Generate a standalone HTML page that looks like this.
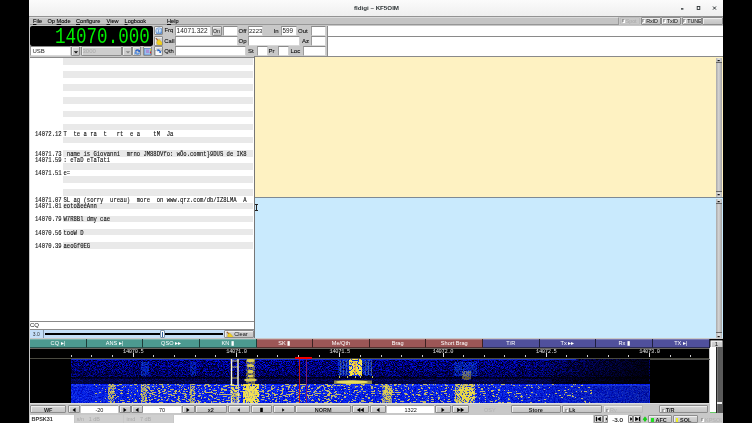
<!DOCTYPE html>
<html><head><meta charset="utf-8">
<style>
*{margin:0;padding:0;box-sizing:border-box}
html,body{width:752px;height:423px;overflow:hidden;background:#000}
body{position:relative;font-family:"Liberation Sans",sans-serif;will-change:transform}
.a{position:absolute}
.btn{position:absolute;background:linear-gradient(#d8d8d8,#c4c4c4);border:1px solid #8c8c8c;border-radius:1px;box-shadow:inset 1px 1px 0 #eee;font-size:5.5px;color:#111;text-align:center;white-space:nowrap;overflow:hidden}
.inp{position:absolute;background:#fff;border-top:1px solid #8a8a8a;border-left:1px solid #9c9c9c;border-bottom:1px solid #d8d8d8;border-right:1px solid #d0d0d0;font-size:6px;white-space:nowrap;overflow:hidden}
.lbl{position:absolute;font-size:6px;color:#111;white-space:nowrap}
.mono{font-family:"Liberation Mono",monospace}
.lt{font-family:"Liberation Mono",monospace;font-size:5.55px;letter-spacing:0;line-height:6.57px;color:#111;white-space:nowrap;margin-top:1.8px;transform:scale(1,1.32);transform-origin:0 50%;-webkit-text-stroke:0.1px #111}
.lt2{font-family:"Liberation Sans",sans-serif;font-size:6px;color:#111;white-space:nowrap}
.mac{position:absolute;top:338.9px;height:8.8px;color:#fff;font-size:5.6px;font-weight:normal;line-height:8.3px;text-align:center;border-bottom:0.8px solid rgba(0,0,0,.45);border-right:1px solid rgba(0,0,0,.6);box-shadow:inset 0 0.8px 0 rgba(255,255,255,.3)}
.sl{font-family:"Liberation Mono",monospace;font-size:5.4px;letter-spacing:-0.3px;color:#e0e0e0;text-align:center;line-height:5px}
.cb{font-size:5.5px;line-height:8px;}
.ci{background:#fff;font-size:5.5px;line-height:9px;text-align:center;white-space:nowrap;overflow:hidden;border-top:1px solid #999;color:#111}
.ck{display:inline-block;width:3px;height:4px;border:0.5px solid #999;border-right-color:#fff;border-bottom-color:#fff;margin-right:1px;vertical-align:-0.5px}
.ind{display:inline-block;width:2.5px;height:4px;margin-right:2px;vertical-align:-0.5px}
.lb2{font-size:5.9px;color:#111;-webkit-text-stroke:0.12px #111}
.tb{font-size:5.4px;line-height:7.2px;text-align:left;padding-left:0.8px;color:#111;letter-spacing:-0.1px}
.sbb{width:5.3px;background:linear-gradient(90deg,#b4b4b4,#e4e4e4 50%,#b4b4b4);border-bottom:0.6px solid #666}
.sbb svg{position:absolute;left:0;top:0.3px}
u{text-decoration-thickness:0.5px;text-underline-offset:1px}
.lbl{-webkit-text-stroke:0.1px #111}
</style></head><body>
<!-- window -->
<div class="a" style="left:29px;top:0;width:694px;height:423px;background:#c8c8c8"></div>
<!-- title bar -->
<div class="a" style="left:29px;top:0;width:694px;height:16.8px;background:linear-gradient(#fbfbfb,#efefef);border-bottom:1px solid #939393"></div>
<div class="a" style="left:300px;top:3.8px;width:152px;text-align:center;font-weight:bold;font-size:6.2px;color:#2e3436;padding-left:1px">fldigi – KF5OIM</div>
<svg class="a" style="left:680px;top:5px" width="40" height="6"><rect x="1" y="3.2" width="2.4" height="1.4" fill="#2e3436"/><rect x="17.2" y="1.5" width="2.6" height="3" fill="none" stroke="#2e3436" stroke-width="0.9"/><path d="M33 1.5L36 4.6M36 1.5L33 4.6" stroke="#2e3436" stroke-width="1"/></svg>

<!-- menu bar -->
<div class="a" style="left:30px;top:16.8px;width:589px;height:8.5px;background:#c4c4c4;border-top:0.7px solid #dadada;border-bottom:1px solid #979797;border-right:1px solid #9a9a9a"></div>
<div class="lbl" style="left:33px;top:17.8px;font-size:5.6px;color:#000"><u>F</u>ile</div>
<div class="lbl" style="left:47.5px;top:17.8px;font-size:5.6px;color:#000">Op <u>M</u>ode</div>
<div class="lbl" style="left:76px;top:17.8px;font-size:5.6px;color:#000"><u>C</u>onfigure</div>
<div class="lbl" style="left:106.5px;top:17.8px;font-size:5.6px;color:#000"><u>V</u>iew</div>
<div class="lbl" style="left:124.5px;top:17.8px;font-size:5.6px;color:#000"><u>L</u>ogbook</div>
<div class="lbl" style="left:167px;top:17.8px;font-size:5.6px;color:#000"><u>H</u>elp</div>

<div class="btn tb" style="left:620px;top:16.8px;width:19.5px;height:8.5px;color:#aaa;background:#c8c8c8;border-color:#bdbdbd;box-shadow:none"><span class="ck"></span>Spot</div>
<div class="btn tb" style="left:640.5px;top:16.8px;width:20px;height:8.5px"><span class="ck"></span>RxID</div>
<div class="btn tb" style="left:661px;top:16.8px;width:20px;height:8.5px"><span class="ck"></span>TxID</div>
<div class="btn tb" style="left:681.5px;top:16.8px;width:20px;height:8.5px"><span class="ck"></span>TUNE</div>
<div class="btn" style="left:702px;top:16.8px;width:20.5px;height:8.5px"></div>

<!-- freq display -->
<div class="a mono" style="left:30px;top:25.5px;width:122.5px;height:20.5px;background:#000;border-radius:2px;color:#00f000;font-size:17.6px;line-height:20px;text-align:right;padding-right:2.6px"><span style="display:inline-block;transform:translateY(1.2px) scale(1,1.29);transform-origin:50% 55%">14070.000</span></div>

<!-- mode row -->
<div class="inp" style="left:30px;top:46.3px;width:40.5px;height:9.7px;font-size:6px;line-height:8px;padding-left:1.5px;color:#222">USB</div>
<div class="btn" style="left:70.5px;top:46.3px;width:9.8px;height:9.7px"><svg width="8" height="8" style="position:absolute;left:0.5px;top:0.5px"><path d="M1.8 3.2h4.4L4 5.6z" fill="#111"/></svg></div>
<div class="btn" style="left:80.5px;top:46.3px;width:41.5px;height:9.7px;color:#aaa;text-align:left;padding-left:1px;line-height:8px;font-size:6px;background:#cdcdcd">3000</div>
<div class="btn" style="left:121.5px;top:46.3px;width:10.5px;height:9.7px;background:#cdcdcd"><svg width="8" height="8" style="position:absolute;left:1px;top:0.5px"><path d="M1.8 3.2h4.4L4 5.6z" fill="#888"/></svg></div>
<div class="btn" style="left:132.3px;top:46.3px;width:8.8px;height:9.7px"><svg width="7" height="8" style="position:absolute;left:0.6px;top:0.7px"><path d="M1 3.5A2.6 2.6 0 0 1 5.6 2.2L6.4 1.2V4H3.7l1-0.9A1.5 1.5 0 0 0 2.2 3.8z" fill="#2a62c8"/><path d="M6 4.5A2.6 2.6 0 0 1 1.4 5.8L0.6 6.8V4H3.3l-1 .9A1.5 1.5 0 0 0 4.8 4.2z" fill="#5a92e0"/></svg></div>
<div class="btn" style="left:142.8px;top:46.3px;width:9px;height:9.7px"><svg width="8" height="8" style="position:absolute;left:0.5px;top:0.7px"><rect x="0.5" y="0.5" width="6" height="6.5" fill="#9cc0ec" stroke="#4a78c0" stroke-width="0.6"/><rect x="2" y="1.5" width="3" height="3.5" fill="#a890d8"/><circle cx="6.8" cy="1.8" r="1" fill="#e8e020"/><circle cx="6.8" cy="4.4" r="1" fill="#e03020"/></svg></div>

<!-- icon buttons -->
<div class="btn" style="left:153.6px;top:25.6px;width:9px;height:9.5px"><svg width="8" height="8" style="position:absolute;left:0.3px;top:0.4px"><defs><radialGradient id="gl" cx="0.4" cy="0.35" r="0.7"><stop offset="0" stop-color="#fff"/><stop offset="0.5" stop-color="#b8d4f0"/><stop offset="1" stop-color="#3a78c8"/></radialGradient></defs><circle cx="4" cy="4" r="3.3" fill="url(#gl)" stroke="#5a8ad0" stroke-width="0.5"/><path d="M2.5 2.2q1.2-.4 1.6.6l-.9 1.1q.7 1 .2 1.9" stroke="#3a70c0" stroke-width="0.7" fill="none"/></svg></div>
<div class="btn" style="left:153.6px;top:35.6px;width:9px;height:10px"><svg width="8" height="9" style="position:absolute;left:0.3px;top:0.3px"><path d="M0.8 1.2L3.2 3.6" stroke="#a0602a" stroke-width="1.2"/><path d="M2.6 3.2L4.4 2.6L7.6 6.2L6.6 8.2L3.2 8.2L1.6 5.8z" fill="#f0d020" stroke="#c8a010" stroke-width="0.4"/></svg></div>
<div class="btn" style="left:153.6px;top:46px;width:9px;height:10px"><svg width="8" height="9" style="position:absolute;left:0.3px;top:0.5px"><rect x="0.6" y="2.2" width="6.4" height="5.6" fill="#fafafa" stroke="#888" stroke-width="0.4"/><path d="M2 1.6Q4.6 0.6 5.4 3.2L6.4 2.6L5.8 5.2L3.6 4.2L4.6 3.8Q4.2 2.4 2.6 3.4z" fill="#2a6ad0"/></svg></div>
<div class="lbl lb2" style="left:164.5px;top:27.3px">Frq</div>
<div class="lbl lb2" style="left:164.3px;top:37.5px">Call</div>
<div class="lbl lb2" style="left:164.3px;top:48px">Qth</div>

<!-- log row inputs -->
<div class="inp" style="left:174.5px;top:25.5px;width:36px;height:10px;line-height:8.5px;font-size:6.5px;padding-left:1px;color:#222;letter-spacing:0.05px">14071.322</div>
<div class="btn" style="left:211.5px;top:25.5px;width:10px;height:10px;line-height:8px">On</div>
<div class="inp" style="left:222.5px;top:25.5px;width:15.5px;height:10px"></div>
<div class="lbl" style="left:238.5px;top:27.5px">Off</div>
<div class="inp" style="left:247.5px;top:25.5px;width:15.5px;height:10px;line-height:8.5px;font-size:6px;padding-left:0.5px;color:#222">2223</div>
<div class="lbl" style="left:273.5px;top:27.5px">In</div>
<div class="inp" style="left:280.5px;top:25.5px;width:16px;height:10px;line-height:8.5px;font-size:6.3px;padding-left:1px;color:#222">599</div>
<div class="lbl" style="left:298px;top:27.5px">Out</div>
<div class="inp" style="left:310.5px;top:25.5px;width:15.5px;height:10px"></div>

<div class="inp" style="left:174.5px;top:35.5px;width:63.5px;height:10px"></div>
<div class="lbl" style="left:238.5px;top:37.5px">Op</div>
<div class="inp" style="left:247.5px;top:35.5px;width:52.5px;height:10px"></div>
<div class="lbl" style="left:302px;top:37.5px">Az</div>
<div class="inp" style="left:310.5px;top:35.5px;width:15.5px;height:10px"></div>

<div class="inp" style="left:174.5px;top:46px;width:71.5px;height:10px"></div>
<div class="lbl" style="left:248px;top:48px">St</div>
<div class="inp" style="left:257px;top:46px;width:11px;height:10px"></div>
<div class="lbl" style="left:268.5px;top:48px">Pr</div>
<div class="inp" style="left:277.5px;top:46px;width:11.5px;height:10px"></div>
<div class="lbl" style="left:290.5px;top:48px">Loc</div>
<div class="inp" style="left:302.5px;top:46px;width:23.5px;height:10px"></div>

<!-- separator + right white -->
<div class="a" style="left:326.5px;top:25.5px;width:1.5px;height:31px;background:#8a8a8a"></div>
<div class="a" style="left:328px;top:25.5px;width:394.5px;height:10px;background:#fff"></div>
<div class="a" style="left:328px;top:35.5px;width:394.5px;height:1px;background:#8a8a8a"></div>
<div class="a" style="left:328px;top:36.5px;width:394.5px;height:20px;background:#fff;border-bottom:1px solid #8a8a8a"></div>

<!-- left list panel -->
<div class="a" style="left:30px;top:56.5px;width:225px;height:265px;background:#fff;border-top:1px solid #8a8a8a"></div>
<div class="a" style="left:63px;top:58.00px;width:190px;height:6.57px;background:#e9e9e9"></div>
<div class="a" style="left:63px;top:71.14px;width:190px;height:6.57px;background:#e9e9e9"></div>
<div class="a" style="left:63px;top:84.28px;width:190px;height:6.57px;background:#e9e9e9"></div>
<div class="a" style="left:63px;top:97.42px;width:190px;height:6.57px;background:#e9e9e9"></div>
<div class="a" style="left:63px;top:110.56px;width:190px;height:6.57px;background:#e9e9e9"></div>
<div class="a" style="left:63px;top:123.70px;width:190px;height:6.57px;background:#e9e9e9"></div>
<div class="a" style="left:63px;top:136.84px;width:190px;height:6.57px;background:#e9e9e9"></div>
<div class="a" style="left:63px;top:149.98px;width:190px;height:6.57px;background:#e9e9e9"></div>
<div class="a" style="left:63px;top:163.12px;width:190px;height:6.57px;background:#e9e9e9"></div>
<div class="a" style="left:63px;top:176.26px;width:190px;height:6.57px;background:#e9e9e9"></div>
<div class="a" style="left:63px;top:189.40px;width:190px;height:6.57px;background:#e9e9e9"></div>
<div class="a" style="left:63px;top:202.54px;width:190px;height:6.57px;background:#e9e9e9"></div>
<div class="a" style="left:63px;top:215.68px;width:190px;height:6.57px;background:#e9e9e9"></div>
<div class="a" style="left:63px;top:228.82px;width:190px;height:6.57px;background:#e9e9e9"></div>
<div class="a" style="left:63px;top:241.96px;width:190px;height:6.57px;background:#e9e9e9"></div>
<div class="a lt" style="left:35px;top:130.27px">14072.12</div>
<div class="a lt" style="left:63.5px;top:130.27px">T&nbsp;&nbsp;te&nbsp;a&nbsp;ra&nbsp;&nbsp;t&nbsp;&nbsp;&nbsp;rt&nbsp;&nbsp;e&nbsp;a&nbsp;&nbsp;&nbsp;&nbsp;tM&nbsp;&nbsp;Ja</div>
<div class="a lt" style="left:35px;top:149.98px">14071.73</div>
<div class="a lt" style="left:63.5px;top:149.98px">&nbsp;name&nbsp;is&nbsp;Giovanni&nbsp;&nbsp;mrno&nbsp;JM88DVfo:&nbsp;wÕo.comnt}9DUS&nbsp;de&nbsp;IK8</div>
<div class="a lt" style="left:35px;top:156.55px">14071.59</div>
<div class="a lt" style="left:63.5px;top:156.55px">:&nbsp;eTaD&nbsp;eTaTati</div>
<div class="a lt" style="left:35px;top:169.69px">14071.51</div>
<div class="a lt" style="left:63.5px;top:169.69px">e=</div>
<div class="a lt" style="left:35px;top:195.97px">14071.07</div>
<div class="a lt" style="left:63.5px;top:195.97px">SL&nbsp;ag&nbsp;(sorry&nbsp;&nbsp;ureau)&nbsp;&nbsp;more&nbsp;&nbsp;on&nbsp;www.qrz.com/db/IZ8LMA&nbsp;&nbsp;A</div>
<div class="a lt" style="left:35px;top:202.54px">14071.01</div>
<div class="a lt" style="left:63.5px;top:202.54px">eotoaeeAnn</div>
<div class="a lt" style="left:35px;top:215.68px">14070.79</div>
<div class="a lt" style="left:63.5px;top:215.68px">W7R8Bl&nbsp;dmy&nbsp;cae</div>
<div class="a lt" style="left:35px;top:228.82px">14070.56</div>
<div class="a lt" style="left:63.5px;top:228.82px">tooW&nbsp;D</div>
<div class="a lt" style="left:35px;top:241.96px">14070.39</div>
<div class="a lt" style="left:63.5px;top:241.96px">aeoGf0EG</div>
<div class="a" style="left:30px;top:320.5px;width:225px;height:1px;background:#8a8a8a"></div>
<div class="a" style="left:30px;top:321.5px;width:225px;height:7.5px;background:#fff"></div>
<div class="a lt2" style="left:30px;top:321.6px">CQ</div>
<div class="a" style="left:30px;top:329px;width:225px;height:1px;background:#8a8a8a"></div>
<!-- slider row -->
<div class="a" style="left:30px;top:329.8px;width:225px;height:8.7px;background:#c4def8"></div>
<div class="a" style="left:30px;top:329.8px;width:13.6px;height:8.5px;background:#c4def8;border-right:1px solid #8496a8;font-size:5px;text-align:center;line-height:8.5px;color:#333">3.0</div>
<div class="a" style="left:44.5px;top:332.9px;width:178px;height:1.8px;background:#000"></div>
<div class="a" style="left:159.6px;top:330.3px;width:5px;height:7.6px;background:linear-gradient(90deg,#f4f8fc,#fff);border:0.6px solid #7890a8;border-radius:1px"></div>
<div class="a" style="left:161.6px;top:331.6px;width:1px;height:5px;background:#3060a0"></div>
<div class="btn" style="left:223.8px;top:330.2px;width:30.5px;height:8.2px;line-height:7px;font-size:5.6px;text-align:left;padding-left:9.5px;color:#111">Clear<svg width="8" height="8" style="position:absolute;left:1px;top:0"><path d="M0.8 0.8L3 3" stroke="#a0602a" stroke-width="1.1"/><path d="M2.4 2.8L4 2.2L6.8 5.4L5.9 7.2L2.9 7.2L1.5 5z" fill="#f0d020" stroke="#c8a010" stroke-width="0.4"/></svg></div>

<!-- yellow rx panel -->
<div class="a" style="left:254px;top:56.3px;width:469px;height:141.5px;background:#fef2c2;border-left:1px solid #777;border-top:1.2px solid #8a8a8a"></div>
<div class="a" style="left:716.3px;top:57.6px;width:5.3px;height:139.4px;background:linear-gradient(90deg,#a8a8a8,#d4d4d4 45%,#c8c8c8 60%,#a0a0a0)"></div>
<div class="a sbb" style="left:716.3px;top:57.6px;height:5.5px"><svg width="5" height="5"><rect x="1.5" y="2" width="2.3" height="1.2" rx="0.5" fill="#111"/></svg></div>
<div class="a sbb" style="left:716.3px;top:191.2px;height:5.8px;border-bottom:none;border-top:0.6px solid #666"><svg width="5" height="5"><rect x="1.5" y="2" width="2.3" height="1.2" rx="0.5" fill="#111"/></svg></div>
<div class="a" style="left:255px;top:197.1px;width:468px;height:1.3px;background:#7e8a94"></div>
<!-- blue tx panel -->
<div class="a" style="left:254px;top:198.3px;width:469px;height:140.2px;background:#c9eafd;border-left:1px solid #777"></div>
<div class="a" style="left:716.3px;top:198.5px;width:5.3px;height:139.7px;background:linear-gradient(90deg,#a8a8a8,#d4d4d4 45%,#c8c8c8 60%,#a0a0a0)"></div>
<div class="a sbb" style="left:716.3px;top:198.5px;height:5.5px"><svg width="5" height="5"><rect x="1.5" y="2" width="2.3" height="1.2" rx="0.5" fill="#111"/></svg></div>
<div class="a sbb" style="left:716.3px;top:332.4px;height:5.8px;border-bottom:none;border-top:0.6px solid #666"><svg width="5" height="5"><rect x="1.5" y="2" width="2.3" height="1.2" rx="0.5" fill="#111"/></svg></div>
<div class="a" style="left:256px;top:204px;width:1px;height:7px;background:#222"></div>
<div class="a" style="left:255.3px;top:204px;width:2.4px;height:0.8px;background:#222"></div>
<div class="a" style="left:255.3px;top:210.4px;width:2.4px;height:0.8px;background:#222"></div>

<!-- macro bar -->
<div class="a" style="left:30px;top:338.5px;width:693px;height:9.5px;background:#000"></div>
<div class="a mac" style="left:30.00px;width:56.63px;background:#4c9a90">CQ ▸|</div>
<div class="a mac" style="left:86.63px;width:56.63px;background:#4c9a90">ANS ▸|</div>
<div class="a mac" style="left:143.27px;width:56.63px;background:#4c9a90">QSO ▸▸</div>
<div class="a mac" style="left:199.90px;width:56.63px;background:#4c9a90">KN ▮</div>
<div class="a mac" style="left:256.53px;width:56.63px;background:#9c5656">SK ▮</div>
<div class="a mac" style="left:313.17px;width:56.63px;background:#9c5656">Me/Qth</div>
<div class="a mac" style="left:369.80px;width:56.63px;background:#9c5656">Brag</div>
<div class="a mac" style="left:426.43px;width:56.63px;background:#9c5656">Short Brag</div>
<div class="a mac" style="left:483.07px;width:56.63px;background:#50509c">T/R</div>
<div class="a mac" style="left:539.70px;width:56.63px;background:#50509c">Tx ▸▸</div>
<div class="a mac" style="left:596.33px;width:56.63px;background:#50509c">Rx ▮</div>
<div class="a mac" style="left:652.97px;width:56.63px;background:#50509c">TX ▸|</div>
<div class="btn" style="left:710.3px;top:339.5px;width:12.3px;height:8px;font-size:6px;line-height:6px">1</div>

<!-- freq scale -->
<div class="a" style="left:30px;top:348px;width:679px;height:11px;background:#000"></div>
<div class="a" style="left:30px;top:357.6px;width:679px;height:1px;background:#4a4a40"></div>
<div class="a" style="left:30px;top:347.8px;width:679px;height:0.8px;background:#6a6660"></div>
<div class="a" style="left:70.80px;top:355px;width:1px;height:1.8px;background:#ccc"></div>
<div class="a" style="left:91.45px;top:355px;width:1px;height:1.8px;background:#ccc"></div>
<div class="a" style="left:112.10px;top:355px;width:1px;height:1.8px;background:#ccc"></div>
<div class="a" style="left:132.75px;top:353.3px;width:1px;height:3.5px;background:#ddd"></div>
<div class="a" style="left:153.40px;top:355px;width:1px;height:1.8px;background:#ccc"></div>
<div class="a" style="left:174.05px;top:355px;width:1px;height:1.8px;background:#ccc"></div>
<div class="a" style="left:194.70px;top:355px;width:1px;height:1.8px;background:#ccc"></div>
<div class="a" style="left:215.35px;top:355px;width:1px;height:1.8px;background:#ccc"></div>
<div class="a" style="left:236.00px;top:353.3px;width:1px;height:3.5px;background:#ddd"></div>
<div class="a" style="left:256.65px;top:355px;width:1px;height:1.8px;background:#ccc"></div>
<div class="a" style="left:277.30px;top:355px;width:1px;height:1.8px;background:#ccc"></div>
<div class="a" style="left:297.95px;top:355px;width:1px;height:1.8px;background:#ccc"></div>
<div class="a" style="left:318.60px;top:355px;width:1px;height:1.8px;background:#ccc"></div>
<div class="a" style="left:339.25px;top:353.3px;width:1px;height:3.5px;background:#ddd"></div>
<div class="a" style="left:359.90px;top:355px;width:1px;height:1.8px;background:#ccc"></div>
<div class="a" style="left:380.55px;top:355px;width:1px;height:1.8px;background:#ccc"></div>
<div class="a" style="left:401.20px;top:355px;width:1px;height:1.8px;background:#ccc"></div>
<div class="a" style="left:421.85px;top:355px;width:1px;height:1.8px;background:#ccc"></div>
<div class="a" style="left:442.50px;top:353.3px;width:1px;height:3.5px;background:#ddd"></div>
<div class="a" style="left:463.15px;top:355px;width:1px;height:1.8px;background:#ccc"></div>
<div class="a" style="left:483.80px;top:355px;width:1px;height:1.8px;background:#ccc"></div>
<div class="a" style="left:504.45px;top:355px;width:1px;height:1.8px;background:#ccc"></div>
<div class="a" style="left:525.10px;top:355px;width:1px;height:1.8px;background:#ccc"></div>
<div class="a" style="left:545.75px;top:353.3px;width:1px;height:3.5px;background:#ddd"></div>
<div class="a" style="left:566.40px;top:355px;width:1px;height:1.8px;background:#ccc"></div>
<div class="a" style="left:587.05px;top:355px;width:1px;height:1.8px;background:#ccc"></div>
<div class="a" style="left:607.70px;top:355px;width:1px;height:1.8px;background:#ccc"></div>
<div class="a" style="left:628.35px;top:355px;width:1px;height:1.8px;background:#ccc"></div>
<div class="a" style="left:649.00px;top:353.3px;width:1px;height:3.5px;background:#ddd"></div>
<div class="a" style="left:669.65px;top:355px;width:1px;height:1.8px;background:#ccc"></div>
<div class="a" style="left:690.30px;top:355px;width:1px;height:1.8px;background:#ccc"></div>
<div class="a sl" style="left:113.25px;top:350.2px;width:40px">14070.5</div>
<div class="a sl" style="left:216.50px;top:350.2px;width:40px">14071.0</div>
<div class="a sl" style="left:319.75px;top:350.2px;width:40px">14071.5</div>
<div class="a sl" style="left:423.00px;top:350.2px;width:40px">14072.0</div>
<div class="a sl" style="left:526.25px;top:350.2px;width:40px">14072.5</div>
<div class="a sl" style="left:629.50px;top:350.2px;width:40px">14073.0</div>

<!-- waterfall -->
<div class="a" style="left:30px;top:359px;width:679px;height:44.5px;background:#000"></div>
<svg class="a" style="left:71px;top:359px" width="578.5" height="44.3" viewBox="0 0 578.5 44.3">
<defs>
<filter id="fu" x="0" y="0" width="100%" height="100%" color-interpolation-filters="sRGB">
<feTurbulence type="fractalNoise" baseFrequency="0.7 1.2" numOctaves="2" seed="7"/>
<feColorMatrix type="matrix" values="2.5 0 0 0 -0.75 2.5 0 0 0 -0.75 2.5 0 0 0 -0.75 2.5 0 0 0 -0.75"/>
<feComponentTransfer>
<feFuncR type="discrete" tableValues="0"/>
<feFuncG type="discrete" tableValues="0 0 0 0 0 0 0.01 0.03 0.05 0.08"/>
<feFuncB type="discrete" tableValues="0.04 0.1 0.2 0.3 0.42 0.55 0.68 0.8 0.9 0.97"/>
<feFuncA type="discrete" tableValues="1 1"/>
</feComponentTransfer>
<feGaussianBlur stdDeviation="0.45 0.35" edgeMode="duplicate"/>
</filter>
<filter id="fl" x="0" y="0" width="100%" height="100%" color-interpolation-filters="sRGB">
<feTurbulence type="fractalNoise" baseFrequency="0.7 1.3" numOctaves="2" seed="11"/>
<feColorMatrix type="matrix" values="2.5 0 0 0 -0.75 2.5 0 0 0 -0.75 2.5 0 0 0 -0.75 2.5 0 0 0 -0.75"/>
<feComponentTransfer>
<feFuncR type="discrete" tableValues="0 0 0 0 0 0.02 0.04 0.07 0.1 0.15"/>
<feFuncG type="discrete" tableValues="0.04 0.06 0.08 0.1 0.12 0.14 0.17 0.2 0.24 0.28"/>
<feFuncB type="discrete" tableValues="0.78 0.86 0.92 0.96 1 1 1 1 1 1"/>
<feFuncA type="discrete" tableValues="1 1"/>
</feComponentTransfer>
<feGaussianBlur stdDeviation="0.4 0.3" edgeMode="duplicate"/>
</filter>
<filter id="ys0" x="-2%" y="0" width="104%" height="100%" color-interpolation-filters="sRGB">
<feTurbulence type="fractalNoise" baseFrequency="0.3 1.1" numOctaves="2" seed="13"/>
<feColorMatrix type="matrix" values="0 0 0 0 0.92 0 0 0 0 0.86 0 0 0 0 0.3 2.5 0 0 0 -0.75"/>
<feComponentTransfer><feFuncA type="discrete" tableValues="0 0 0 0 0 0 0 0 0 0 0 0 0 0 0 0 0 0 0 0 0 0 0 0 0 0 0 0 0 0 0 0 0 0 0 0 0 0 0 0 0 0 0 0 0 0 0 0 0 0"/></feComponentTransfer>
<feComponentTransfer><feFuncA type="linear" slope="0.8"/></feComponentTransfer><feGaussianBlur stdDeviation="0.4 0.25"/>
</filter>
<filter id="ys1" x="-2%" y="0" width="104%" height="100%" color-interpolation-filters="sRGB">
<feTurbulence type="fractalNoise" baseFrequency="0.3 1.1" numOctaves="2" seed="14"/>
<feColorMatrix type="matrix" values="0 0 0 0 0.92 0 0 0 0 0.86 0 0 0 0 0.3 2.5 0 0 0 -0.75"/>
<feComponentTransfer><feFuncA type="discrete" tableValues="0 0 0 0 0 0 0 0 0 0 0 0 0 0 0 0 0 0 0 0 0 0 0 0 0 0 0 0 0 0 0 0 0 0 0 0 0 0 0 0 0 0 0 0 0 0 1 1 1 1"/></feComponentTransfer>
<feComponentTransfer><feFuncA type="linear" slope="0.8"/></feComponentTransfer><feGaussianBlur stdDeviation="0.4 0.25"/>
</filter>
<filter id="ys2" x="-2%" y="0" width="104%" height="100%" color-interpolation-filters="sRGB">
<feTurbulence type="fractalNoise" baseFrequency="0.3 1.1" numOctaves="2" seed="15"/>
<feColorMatrix type="matrix" values="0 0 0 0 0.92 0 0 0 0 0.86 0 0 0 0 0.3 2.5 0 0 0 -0.75"/>
<feComponentTransfer><feFuncA type="discrete" tableValues="0 0 0 0 0 0 0 0 0 0 0 0 0 0 0 0 0 0 0 0 0 0 0 0 0 0 0 0 0 0 0 0 0 0 0 0 0 0 0 0 1 1 1 1 1 1 1 1 1 1"/></feComponentTransfer>
<feComponentTransfer><feFuncA type="linear" slope="0.8"/></feComponentTransfer><feGaussianBlur stdDeviation="0.4 0.25"/>
</filter>
<filter id="ys3" x="-2%" y="0" width="104%" height="100%" color-interpolation-filters="sRGB">
<feTurbulence type="fractalNoise" baseFrequency="0.3 1.1" numOctaves="2" seed="16"/>
<feColorMatrix type="matrix" values="0 0 0 0 0.92 0 0 0 0 0.86 0 0 0 0 0.3 2.5 0 0 0 -0.75"/>
<feComponentTransfer><feFuncA type="discrete" tableValues="0 0 0 0 0 0 0 0 0 0 0 0 0 0 0 0 0 0 0 0 0 0 0 0 0 0 0 0 0 0 0 0 0 0 0 0 1 1 1 1 1 1 1 1 1 1 1 1 1 1"/></feComponentTransfer>
<feComponentTransfer><feFuncA type="linear" slope="0.8"/></feComponentTransfer><feGaussianBlur stdDeviation="0.4 0.25"/>
</filter>
<filter id="ys4" x="-2%" y="0" width="104%" height="100%" color-interpolation-filters="sRGB">
<feTurbulence type="fractalNoise" baseFrequency="0.3 1.1" numOctaves="2" seed="17"/>
<feColorMatrix type="matrix" values="0 0 0 0 0.92 0 0 0 0 0.86 0 0 0 0 0.3 2.5 0 0 0 -0.75"/>
<feComponentTransfer><feFuncA type="discrete" tableValues="0 0 0 0 0 0 0 0 0 0 0 0 0 0 0 0 0 0 0 0 0 0 0 0 0 0 0 0 0 0 0 0 0 0 0 0 0 0 1 1 1 1 1 1 1 1 1 1 1 1"/></feComponentTransfer>
<feComponentTransfer><feFuncA type="linear" slope="0.8"/></feComponentTransfer><feGaussianBlur stdDeviation="0.4 0.25"/>
</filter>
<filter id="ys5" x="-2%" y="0" width="104%" height="100%" color-interpolation-filters="sRGB">
<feTurbulence type="fractalNoise" baseFrequency="0.3 1.1" numOctaves="2" seed="18"/>
<feColorMatrix type="matrix" values="0 0 0 0 0.92 0 0 0 0 0.86 0 0 0 0 0.3 2.5 0 0 0 -0.75"/>
<feComponentTransfer><feFuncA type="discrete" tableValues="0 0 0 0 0 0 0 0 0 0 0 0 0 0 0 0 0 0 0 0 0 0 0 0 0 0 0 0 0 0 0 0 0 0 0 0 0 0 0 0 0 0 0 1 1 1 1 1 1 1"/></feComponentTransfer>
<feComponentTransfer><feFuncA type="linear" slope="0.8"/></feComponentTransfer><feGaussianBlur stdDeviation="0.4 0.25"/>
</filter>
<filter id="ys6" x="-2%" y="0" width="104%" height="100%" color-interpolation-filters="sRGB">
<feTurbulence type="fractalNoise" baseFrequency="0.3 1.1" numOctaves="2" seed="19"/>
<feColorMatrix type="matrix" values="0 0 0 0 0.92 0 0 0 0 0.86 0 0 0 0 0.3 2.5 0 0 0 -0.75"/>
<feComponentTransfer><feFuncA type="discrete" tableValues="0 0 0 0 0 0 0 0 0 0 0 0 0 0 0 0 0 0 0 0 0 0 0 0 0 0 0 0 0 0 0 0 0 0 0 0 0 0 0 0 0 0 0 0 0 0 0 0 0 1"/></feComponentTransfer>
<feComponentTransfer><feFuncA type="linear" slope="0.8"/></feComponentTransfer><feGaussianBlur stdDeviation="0.4 0.25"/>
</filter>
<filter id="ys7" x="-2%" y="0" width="104%" height="100%" color-interpolation-filters="sRGB">
<feTurbulence type="fractalNoise" baseFrequency="0.3 1.1" numOctaves="2" seed="20"/>
<feColorMatrix type="matrix" values="0 0 0 0 0.92 0 0 0 0 0.86 0 0 0 0 0.3 2.5 0 0 0 -0.75"/>
<feComponentTransfer><feFuncA type="discrete" tableValues="0 0 0 0 0 0 0 0 0 0 0 0 0 0 0 0 0 0 0 0 0 0 0 0 0 0 0 0 0 0 0 0 0 0 0 0 0 0 0 0 0 0 0 0 0 0 0 0 0 0"/></feComponentTransfer>
<feComponentTransfer><feFuncA type="linear" slope="0.8"/></feComponentTransfer><feGaussianBlur stdDeviation="0.4 0.25"/>
</filter>
<filter id="fy" x="0" y="0" width="100%" height="100%" color-interpolation-filters="sRGB">
<feTurbulence type="fractalNoise" baseFrequency="0.7 1.2" numOctaves="2" seed="5"/>
<feColorMatrix type="matrix" values="2.5 0 0 0 -0.75 2.5 0 0 0 -0.75 2.5 0 0 0 -0.75 2.5 0 0 0 -0.75"/>
<feComponentTransfer>
<feFuncR type="discrete" tableValues="0 0.05 0.1 0.91 0.91 0.92 0.93 0.95 0.97 1"/>
<feFuncG type="discrete" tableValues="0.12 0.2 0.25 0.84 0.84 0.85 0.86 0.88 0.9 0.92"/>
<feFuncB type="discrete" tableValues="0.9 0.95 1 0.28 0.25 0.25 0.25 0.28 0.3 0.35"/>
<feFuncA type="discrete" tableValues="1 1"/>
</feComponentTransfer>

</filter>
<filter id="fb" x="0" y="0" width="100%" height="100%" color-interpolation-filters="sRGB">
<feTurbulence type="fractalNoise" baseFrequency="0.7 1.2" numOctaves="2" seed="17"/>
<feColorMatrix type="matrix" values="2.5 0 0 0 -0.75 2.5 0 0 0 -0.75 2.5 0 0 0 -0.75 2.5 0 0 0 -0.75"/>
<feComponentTransfer>
<feFuncR type="discrete" tableValues="0 0 0 0 0 0.02 0.05 0.08 0.12 0.16"/>
<feFuncG type="discrete" tableValues="0.1 0.13 0.16 0.2 0.24 0.28 0.32 0.36 0.4 0.45"/>
<feFuncB type="discrete" tableValues="1"/>
<feFuncA type="discrete" tableValues="0 0 0.2 0.5 0.8 1 1 1 1 1"/>
</feComponentTransfer>

</filter>
<linearGradient id="gfade" x1="0" x2="1" y1="0" y2="0">
<stop offset="0" stop-color="#000" stop-opacity="0.15"/>
<stop offset="0.3" stop-color="#000" stop-opacity="0"/>
<stop offset="0.78" stop-color="#000" stop-opacity="0.1"/>
<stop offset="0.9" stop-color="#000" stop-opacity="0.55"/>
<stop offset="1" stop-color="#000" stop-opacity="0.85"/>
</linearGradient>
<linearGradient id="gfade2" x1="0" x2="1" y1="0" y2="0">
<stop offset="0" stop-color="#000" stop-opacity="0.1"/>
<stop offset="0.3" stop-color="#000" stop-opacity="0.05"/>
<stop offset="0.75" stop-color="#000" stop-opacity="0.1"/>
<stop offset="1" stop-color="#000" stop-opacity="0.3"/>
</linearGradient>
<linearGradient id="gdark" x1="0" x2="0" y1="0" y2="1">
<stop offset="0" stop-color="#000" stop-opacity="0"/>
<stop offset="0.5" stop-color="#000" stop-opacity="0.2"/>
<stop offset="1" stop-color="#000" stop-opacity="0.8"/>
</linearGradient>
</defs>
<rect x="0" y="0" width="578.5" height="26" filter="url(#fu)"/>
<rect x="0" y="6" width="578.5" height="20" fill="url(#gdark)"/>
<rect x="0" y="0" width="578.5" height="26" fill="url(#gfade)"/>
<rect x="0" y="0" width="505" height="1" fill="#1838e8" opacity="0.8"/>
<rect x="0" y="26" width="578.5" height="18.3" filter="url(#fl)"/>
<rect x="0" y="26" width="578.5" height="18.3" fill="url(#gfade2)"/>
<rect x="0" y="26" width="578.5" height="1" fill="#4060ff" opacity="0.35"/>
<rect x="0" y="26" width="24" height="18.3" filter="url(#ys0)"/>
<rect x="24" y="26" width="16" height="18.3" filter="url(#ys1)"/>
<rect x="40" y="26" width="39" height="18.3" filter="url(#ys2)"/>
<rect x="79" y="26" width="180" height="18.3" filter="url(#ys3)"/>
<rect x="259" y="26" width="130" height="18.3" filter="url(#ys4)"/>
<rect x="389" y="26" width="70" height="18.3" filter="url(#ys5)"/>
<rect x="459" y="26" width="60" height="18.3" filter="url(#ys6)"/>
<rect x="519" y="26" width="60" height="18.3" filter="url(#ys7)"/>
<rect x="0.0" y="18.0" width="578.5" height="1.5" fill="#000" opacity="0.6"/>
<rect x="0.0" y="20.0" width="480" height="5" fill="#0818c0" opacity="0.2"/>
<rect x="70.0" y="3.0" width="7" height="14" filter="url(#fb)" opacity="0.5"/>
<rect x="119.0" y="3.0" width="5" height="14" filter="url(#fb)" opacity="0.45"/>
<rect x="384.0" y="3.0" width="22" height="14" filter="url(#fb)" opacity="0.5"/>
<rect x="37.5" y="26.0" width="4.5" height="18.3" filter="url(#fy)" opacity="0.7"/>
<rect x="70.5" y="26.0" width="5" height="18.3" filter="url(#fy)" opacity="0.7"/>
<rect x="119.0" y="26.0" width="4.5" height="18.3" filter="url(#fy)" opacity="0.7"/>
<ellipse cx="316.5" cy="35.0" rx="4.5" ry="8" fill="#d8c850" opacity="0.75"/>
<rect x="312.0" y="26.0" width="9" height="18.3" filter="url(#fy)" opacity="0.6"/>
<ellipse cx="395.0" cy="36.0" rx="9" ry="8.5" fill="#e0d050" opacity="0.9"/>
<rect x="385.0" y="26.0" width="19" height="18.3" filter="url(#fy)" opacity="0.8"/>
<rect x="159.8" y="0.0" width="1.4" height="44.3" fill="#fffcd8" opacity="1"/>
<rect x="166.3" y="0.0" width="1.4" height="44.3" fill="#fffcd8" opacity="1"/>
<rect x="160.0" y="1.5" width="7.5" height="1" fill="#e8e090" opacity="0.8"/>
<rect x="160.0" y="7.5" width="7.5" height="1" fill="#e8e090" opacity="0.8"/>
<rect x="160.0" y="18.5" width="7.5" height="1" fill="#e8e090" opacity="0.8"/>
<rect x="160.0" y="26.5" width="7.5" height="1" fill="#e8e090" opacity="0.8"/>
<rect x="160.0" y="33.5" width="7.5" height="1" fill="#e8e090" opacity="0.8"/>
<rect x="160.0" y="42.5" width="7.5" height="1" fill="#e8e090" opacity="0.8"/>
<rect x="160.5" y="27.0" width="6" height="6" filter="url(#fy)" opacity="0.85"/>
<rect x="160.5" y="35.0" width="6" height="7" filter="url(#fy)" opacity="0.7"/>
<rect x="175.5" y="0.0" width="8" height="26" filter="url(#fy)" opacity="0.45"/>
<ellipse cx="179.5" cy="1.5" rx="4" ry="1.8" fill="#e8d850" opacity="0.9"/>
<ellipse cx="179.5" cy="6.5" rx="3.5" ry="1.5" fill="#e8d850" opacity="0.9"/>
<ellipse cx="179.5" cy="12.5" rx="3" ry="1.8" fill="#e8d850" opacity="0.9"/>
<ellipse cx="179.5" cy="17.0" rx="3" ry="1.2" fill="#e8d850" opacity="0.9"/>
<ellipse cx="179.5" cy="21.0" rx="6.5" ry="1.6" fill="#e8d850" opacity="0.9"/>
<rect x="172.5" y="26.0" width="15" height="18.3" filter="url(#fy)" opacity="1"/>
<ellipse cx="179.5" cy="35.0" rx="6" ry="8" fill="#f0e060" opacity="0.7"/>
<rect x="267.0" y="0.0" width="34" height="17" filter="url(#fb)" opacity="0.6"/>
<rect x="269.0" y="1.0" width="0.8" height="15" fill="#d0d070" opacity="0.35"/>
<rect x="272.0" y="1.0" width="0.8" height="15" fill="#d0d070" opacity="0.35"/>
<rect x="275.0" y="1.0" width="0.8" height="15" fill="#d0d070" opacity="0.35"/>
<rect x="294.0" y="1.0" width="0.8" height="15" fill="#d0d070" opacity="0.35"/>
<rect x="297.0" y="1.0" width="0.8" height="15" fill="#d0d070" opacity="0.35"/>
<rect x="300.0" y="1.0" width="0.8" height="15" fill="#d0d070" opacity="0.35"/>
<rect x="278.5" y="0.0" width="12.5" height="17" filter="url(#fy)" opacity="1"/>
<rect x="283.5" y="3.0" width="1.5" height="12" fill="#f0a040" opacity="0.8"/>
<rect x="268.0" y="17.0" width="1" height="2" fill="#e8d850" opacity="0.9"/>
<rect x="276.0" y="17.0" width="1" height="2" fill="#e8d850" opacity="0.9"/>
<rect x="284.0" y="17.0" width="1" height="2" fill="#e8d850" opacity="0.9"/>
<rect x="289.0" y="17.0" width="1" height="2" fill="#e8d850" opacity="0.9"/>
<rect x="301.0" y="17.0" width="1" height="2" fill="#e8d850" opacity="0.9"/>
<rect x="263.0" y="21.5" width="38" height="3.5" fill="#e8d850" opacity="0.6"/>
<ellipse cx="281.0" cy="23.0" rx="16" ry="1.8" fill="#f4e860" opacity="0.9"/>
<rect x="392.0" y="12.0" width="8" height="9" filter="url(#fy)" opacity="0.4"/>
</svg>
<div class="a" style="left:294.5px;top:357px;width:17.3px;height:1.6px;background:#f00000"></div>
<div class="a" style="left:299.2px;top:359px;width:0.9px;height:44.3px;background:#b81818"></div>
<div class="a" style="left:305.5px;top:359px;width:0.9px;height:44.3px;background:#7a2070"></div>

<!-- right meter -->
<div class="a" style="left:650px;top:359px;width:59.5px;height:0.8px;background:#4a4a4a"></div>
<div class="a" style="left:709.5px;top:347.4px;width:6.7px;height:66px;background:#fff;border-bottom:1px solid #6c6"></div>
<div class="a" style="left:716.2px;top:347.4px;width:0.5px;height:66px;background:#222"></div>
<div class="a" style="left:716.6px;top:347.4px;width:6px;height:66px;background:#5a5a5a;border-left:0.5px solid #777"></div>
<div class="a" style="left:717.3px;top:401.8px;width:4.6px;height:2px;background:#f4f4f4"></div>

<!-- control row -->
<div class="a" style="left:30px;top:403.3px;width:679.5px;height:10.5px;background:#c8c8c8;border-top:1px solid #dcdcdc"></div>
<div class="a" style="left:30px;top:413.8px;width:693px;height:9.2px;background:#c8c8c8"></div>
<div class="btn cb" style="left:30px;top:405.4px;width:36.4px;height:8.0px;font-weight:bold;color:#222">WF</div>
<div class="btn cb" style="left:67.9px;top:405.4px;width:12.4px;height:8.0px;"><svg width="6" height="6" style="vertical-align:-0.5px"><path d="M1.5 3L4.5 0.8V5.2z" fill="#000"/></svg></div>
<div class="a ci" style="left:80.5px;top:405.4px;width:37.9px;height:8.0px;">-20</div>
<div class="btn cb" style="left:118.5px;top:405.4px;width:12.0px;height:8.0px;"><svg width="6" height="6" style="vertical-align:-0.5px"><path d="M4.5 3L1.5 0.8V5.2z" fill="#000"/></svg></div>
<div class="btn cb" style="left:131px;top:405.4px;width:11.9px;height:8.0px;"><svg width="6" height="6" style="vertical-align:-0.5px"><path d="M1.5 3L4.5 0.8V5.2z" fill="#000"/></svg></div>
<div class="a ci" style="left:143px;top:405.4px;width:38.0px;height:8.0px;">70</div>
<div class="btn cb" style="left:182.3px;top:405.4px;width:12.3px;height:8.0px;"><svg width="6" height="6" style="vertical-align:-0.5px"><path d="M4.5 3L1.5 0.8V5.2z" fill="#000"/></svg></div>
<div class="btn cb" style="left:195px;top:405.4px;width:31.5px;height:8.0px;font-weight:bold;color:#222">x2</div>
<div class="btn cb" style="left:228px;top:405.4px;width:21.9px;height:8.0px;"><svg width="5" height="6" style="vertical-align:-0.5px"><path d="M1.5 3L3.8 1.2V4.8z" fill="#000"/></svg></div>
<div class="btn cb" style="left:250.5px;top:405.4px;width:21.5px;height:8.0px;"><svg width="5" height="6" style="vertical-align:-0.5px"><rect x="1.2" y="0.8" width="2.6" height="4.4" fill="#000"/></svg></div>
<div class="btn cb" style="left:272.5px;top:405.4px;width:22.1px;height:8.0px;"><svg width="5" height="6" style="vertical-align:-0.5px"><path d="M3.5 3L1.2 1.2V4.8z" fill="#000"/></svg></div>
<div class="btn cb" style="left:295px;top:405.4px;width:56.3px;height:8.0px;font-weight:bold;color:#222">NORM</div>
<div class="btn cb" style="left:352px;top:405.4px;width:17.4px;height:8.0px;"><svg width="9" height="6" style="vertical-align:-0.5px"><path d="M0.8 3L4.3 0.8V5.2zM4.3 3L7.8 0.8V5.2z" fill="#000"/></svg></div>
<div class="btn cb" style="left:370px;top:405.4px;width:16.4px;height:8.0px;"><svg width="6" height="6" style="vertical-align:-0.5px"><path d="M1.5 3L4.5 0.8V5.2z" fill="#000"/></svg></div>
<div class="a ci" style="left:387px;top:405.4px;width:47.3px;height:8.0px;">1322</div>
<div class="btn cb" style="left:434.5px;top:405.4px;width:16.8px;height:8.0px;"><svg width="6" height="6" style="vertical-align:-0.5px"><path d="M4.5 3L1.5 0.8V5.2z" fill="#000"/></svg></div>
<div class="btn cb" style="left:452px;top:405.4px;width:17.4px;height:8.0px;"><svg width="9" height="6" style="vertical-align:-0.5px"><path d="M8.2 3L4.7 0.8V5.2zM4.7 3L1.2 0.8V5.2z" fill="#000"/></svg></div>
<div class="btn cb" style="left:470px;top:405.4px;width:39.7px;height:8.0px;color:#b0b0b0;background:#c8c8c8;border-color:#c8c8c8;box-shadow:none">QSY</div>
<div class="btn cb" style="left:511px;top:405.4px;width:49.7px;height:8.0px;font-weight:bold;color:#222">Store</div>
<div class="btn cb" style="left:562px;top:405.4px;width:40.2px;height:8.0px;text-align:left;padding-left:2px;font-weight:bold;color:#222"><span class="ck"></span>Lk</div>
<div class="btn cb" style="left:603px;top:405.4px;width:40.2px;height:8.0px;text-align:left;padding-left:2px;color:#b0b0b0;border-color:#bbb"><span class="ck"></span>Rv</div>
<div class="btn cb" style="left:658.7px;top:405.4px;width:49.0px;height:8.0px;text-align:left;padding-left:2px;font-weight:bold;color:#222"><span class="ck"></span>T/R</div>
<div class="a ci" style="left:30px;top:414.7px;width:44.3px;height:9px;text-align:left;padding-left:1.5px;border:none;font-weight:bold;color:#333">BPSK31</div>
<div class="a ci" style="left:74.8px;top:414.7px;width:48.7px;height:9px;background:#cfcfcf;color:#aaa;text-align:left;padding-left:2px;border:none">s/n&nbsp;&nbsp;&nbsp;1 dB</div>
<div class="a ci" style="left:124px;top:414.7px;width:49px;height:9px;background:#cfcfcf;color:#aaa;text-align:left;padding-left:2.5px;border:none">imd&nbsp;&nbsp;&nbsp;7 dB</div>
<div class="a ci" style="left:174px;top:414.7px;width:419.4px;height:9px;border:none"></div>
<div class="btn cb" style="left:593.5px;top:414.7px;width:9.0px;height:8.3px;padding:0"><svg width="7" height="6" style="vertical-align:-0.5px"><rect x="0.8" y="0.8" width="1.2" height="4.4"/><path d="M2.2 3L5.8 0.8V5.2z"/></svg></div>
<div class="btn cb" style="left:602.5px;top:414.7px;width:5.0px;height:8.3px;padding:0"><svg width="5" height="6" style="vertical-align:-0.5px"><path d="M1.5 3L3.8 1.2V4.8z" fill="#000"/></svg></div>
<div class="a ci" style="left:607.5px;top:414.7px;width:20.0px;height:8.3px;border:none;font-size:6.2px;-webkit-text-stroke:0.15px #111">-3.0</div>
<div class="btn cb" style="left:627.5px;top:414.7px;width:5.5px;height:8.3px;padding:0"><svg width="5" height="6" style="vertical-align:-0.5px"><path d="M3.5 3L1.2 1.2V4.8z" fill="#000"/></svg></div>
<div class="btn cb" style="left:633px;top:414.7px;width:7.5px;height:8.3px;padding:0"><svg width="7" height="6" style="vertical-align:-0.5px"><rect x="5" y="0.8" width="1.2" height="4.4"/><path d="M4.8 3L1.2 0.8V5.2z"/></svg></div>
<svg class="a" style="left:640.8px;top:414.8px" width="8" height="8.5"><path d="M4 0.8L6.6 4.2L4 7.6L1.4 4.2z" fill="#18d018" stroke="#f0c0f0" stroke-width="0.6"/></svg>
<div class="btn cb" style="left:648px;top:414.7px;width:24.1px;height:8.3px;text-align:left;padding-left:2px;font-weight:bold;color:#222"><span class="ind" style="background:#22dd22"></span>AFC</div>
<div class="btn cb" style="left:672.5px;top:414.7px;width:25.2px;height:8.3px;text-align:left;padding-left:2px;font-weight:bold;color:#222"><span class="ind" style="background:#eeee22"></span>SQL</div>
<div class="btn cb" style="left:698px;top:414.7px;width:24.5px;height:8.3px;text-align:left;padding-left:2px;color:#b0b0b0;border-color:#c8c8c8;background:#c8c8c8;box-shadow:none"><span class="ck"></span>KPSQL</div>
</body></html>
